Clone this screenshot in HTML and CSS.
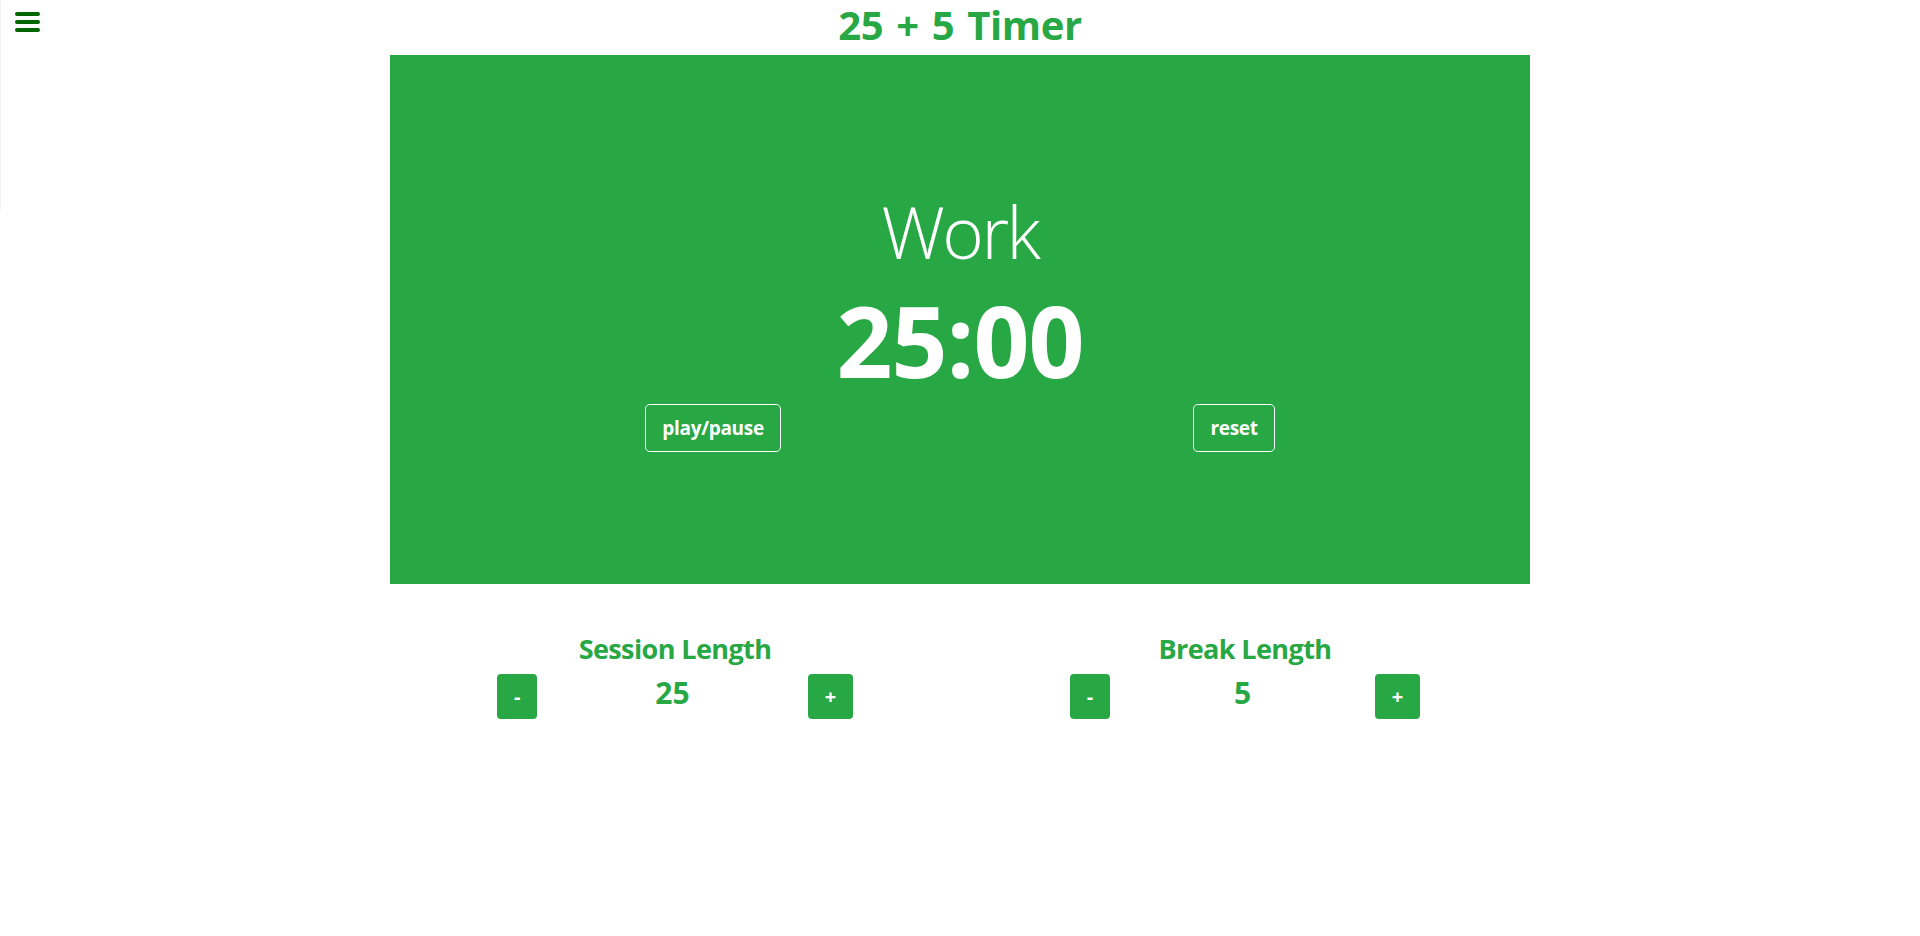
FILE: index.html
```html
<!DOCTYPE html>
<html lang="en">
<head>
<meta charset="utf-8">
<title>25 + 5 Timer</title>
<link rel="stylesheet" href="styles.css">
</head>
<body>
<div class="sidebar-edge"></div>
<button class="menu-toggle" aria-label="menu">
  <svg width="50" height="36" viewBox="0 0 50 36">
    <g stroke="#006400" stroke-width="4" stroke-linecap="round">
      <line x1="17" y1="14" x2="38" y2="14"/>
      <line x1="17" y1="22" x2="38" y2="22"/>
      <line x1="17" y1="30" x2="38" y2="30"/>
    </g>
  </svg>
</button>
<h1 class="title">25 + 5 Timer</h1>
<main class="container">
  <section class="timer">
    <div class="timer-label">Work</div>
    <div class="timer-left">25:00</div>
    <div class="timer-controls">
      <button class="btn-outline">play/pause</button>
      <button class="btn-outline">reset</button>
    </div>
  </section>
  <section class="settings">
    <div class="setting">
      <h3 class="setting-label">Session Length</h3>
      <div class="setting-row">
        <button class="btn-step minus">-</button>
        <div class="setting-value">25</div>
        <button class="btn-step plus">+</button>
      </div>
    </div>
    <div class="setting">
      <h3 class="setting-label">Break Length</h3>
      <div class="setting-row">
        <button class="btn-step minus">-</button>
        <div class="setting-value">5</div>
        <button class="btn-step plus">+</button>
      </div>
    </div>
  </section>
</main>
</body>
</html>
```
FILE: styles.css
```css
* { box-sizing: border-box; }
body {
  margin: 0;
  background: #fff;
  font-family: "Open Sans", "Noto Sans", sans-serif;
  color: #28a745;
}
.sidebar-edge {
  position: absolute;
  left: 0;
  top: 0;
  width: 1px;
  height: 210px;
  background: #f1f1f1;
}
.menu-toggle {
  position: absolute;
  left: 0;
  top: 0;
  border: 0;
  padding: 0;
  background: transparent;
  width: 50px;
  height: 36px;
}
.menu-toggle svg { display: block; }
.title {
  margin: 0 0 7px;
  padding-top: 1px;
  text-align: center;
  font-size: 40px;
  line-height: 47px;
  font-weight: 700;
  word-spacing: 3px;
  letter-spacing: -0.4px;
  color: #28a745;
}
.container {
  width: 1140px;
  margin: 0 auto;
}
.timer {
  background: #28a745;
  height: 529px;
  padding-top: 137px;
  color: #fff;
  text-align: center;
}
.timer-label {
  font-size: 71px;
  font-weight: 300;
  line-height: 80px;
  letter-spacing: -2.5px;
}
.timer-left {
  margin-top: 18px;
  font-size: 98px;
  font-weight: 700;
  line-height: 100px;
  letter-spacing: -1px;
}
.timer-controls {
  margin-top: 14px;
  display: flex;
  justify-content: space-around;
  padding: 0 49px;
}
.btn-outline {
  font-family: inherit;
  height: 48px;
  padding: 0 16px;
  font-size: 19px;
  font-weight: 700;
  letter-spacing: -0.3px;
  color: #fff;
  background: transparent;
  border: 1px solid #fff;
  border-radius: 4.8px;
}
.settings {
  display: flex;
  margin-top: 48px;
}
.setting {
  flex: 1;
  text-align: center;
}
.setting-label {
  margin: 0;
  font-size: 27px;
  line-height: 34px;
  font-weight: 700;
  letter-spacing: -0.6px;
}
.setting-row {
  margin-top: 8px;
  display: flex;
  justify-content: space-around;
  align-items: flex-start;
  padding: 0 48px;
}
.setting-value {
  font-size: 30px;
  font-weight: 700;
  line-height: 38px;
}
.btn-step {
  font-family: inherit;
  height: 45px;
  padding: 0;
  border: 0;
  border-radius: 4px;
  background: #28a745;
  color: #fff;
  font-size: 20px;
  font-weight: 700;
}
.btn-step.minus { width: 40px; }
.btn-step.plus { width: 45px; }
```
